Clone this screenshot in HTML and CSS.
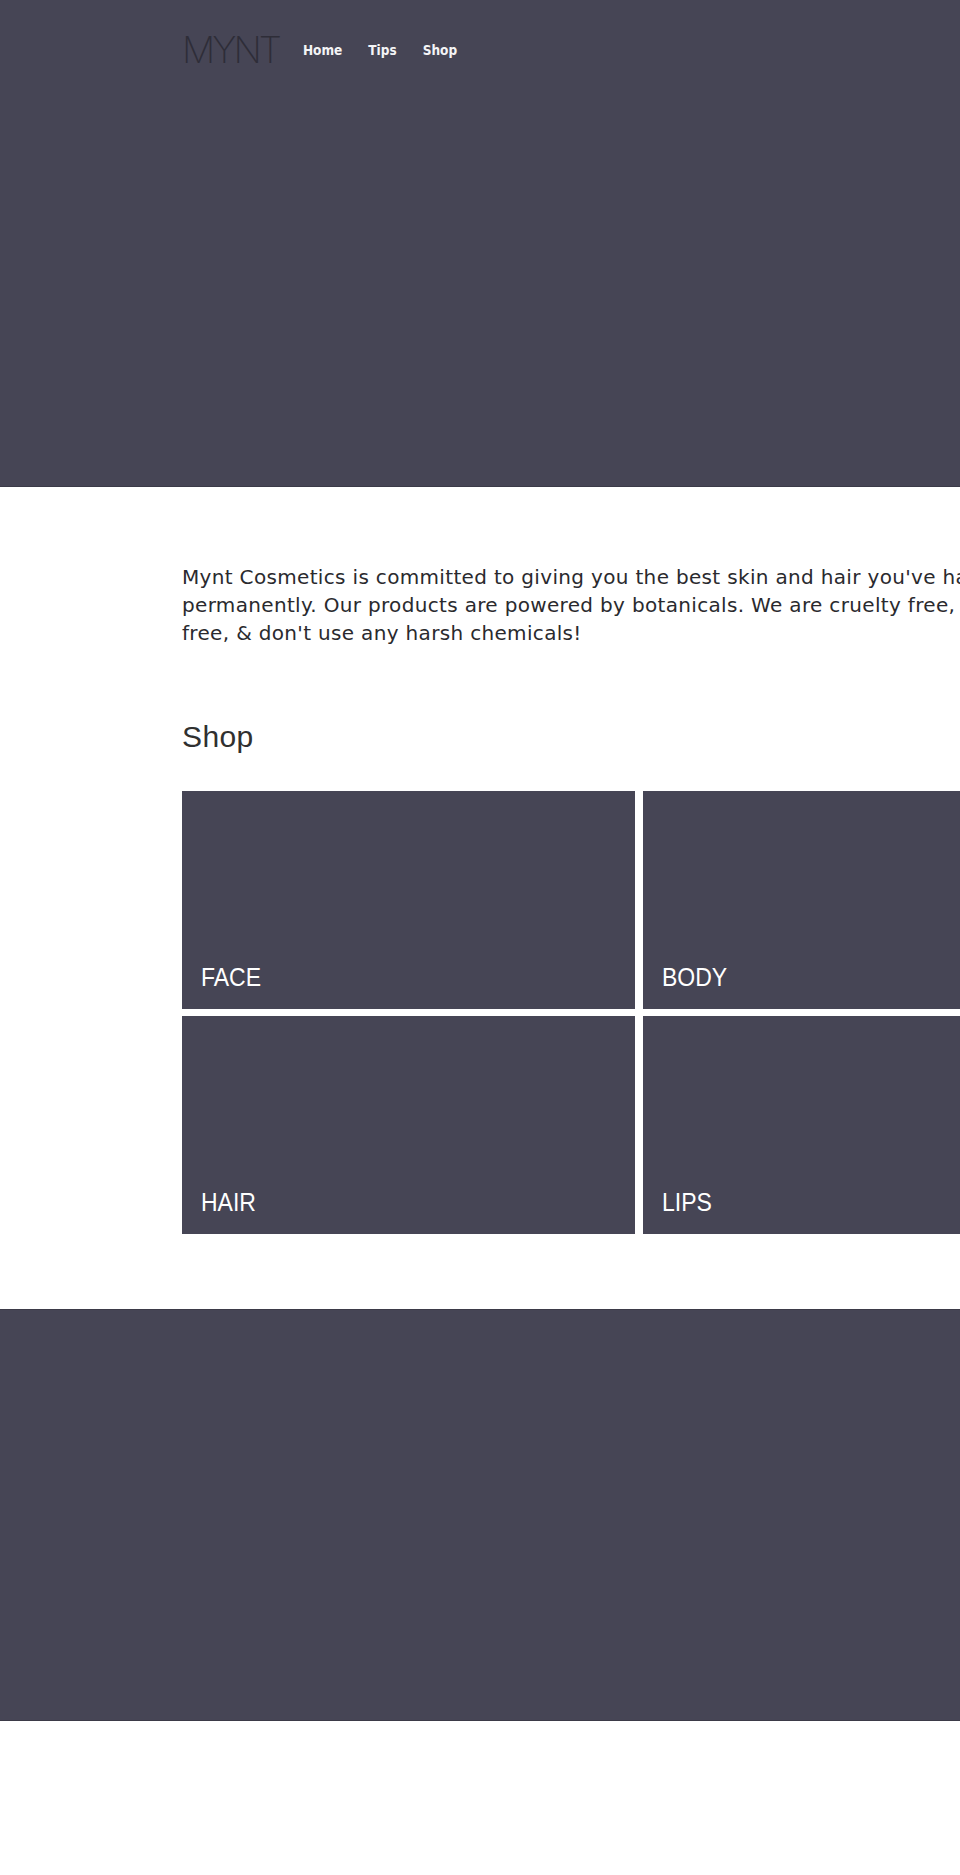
FILE: index.html
```html
<!DOCTYPE html>
<html lang="en">
<head>
<meta charset="utf-8">
<title>Mynt Cosmetics</title>
<link rel="stylesheet" href="styles.css">
</head>
<body>
<header class="hero">
  <div class="container topbar">
    <div class="logo">MYNT</div>
    <nav class="nav">
      <a href="#">Home</a>
      <a href="#">Tips</a>
      <a href="#">Shop</a>
    </nav>
  </div>
</header>
<main class="container content">
  <p class="intro">Mynt Cosmetics is committed to giving you the best skin and hair you've had permanently. Our products are powered by botanicals. We are cruelty free, paraben free, &amp; don't use any harsh chemicals!</p>
  <h2 class="section-title">Shop</h2>
  <div class="tiles">
    <a class="tile" href="#"><span class="tile-label">FACE</span></a>
    <a class="tile" href="#"><span class="tile-label">BODY</span></a>
    <a class="tile" href="#"><span class="tile-label">HAIR</span></a>
    <a class="tile" href="#"><span class="tile-label">LIPS</span></a>
  </div>
</main>
<footer class="footer"></footer>
</body>
</html>
```

FILE: styles.css
```css
html, body {
  margin: 0;
  padding: 0;
}
body {
  background: #ffffff;
  overflow-x: hidden;
  min-height: 1875px;
}
.container {
  margin-left: 182px;
  width: 914px;
}
.hero {
  height: 487px;
  box-sizing: border-box;
  background: #464555;
  border-bottom: 1px solid #3b3a48;
}
.topbar {
  display: flex;
  align-items: center;
  padding-top: 31px;
  gap: 24px;
}
.logo {
  font-family: Inter, "Liberation Sans", sans-serif;
  font-weight: 200;
  font-size: 37px;
  line-height: 37px;
  letter-spacing: -3px;
  color: #2e2d38;
}
.nav {
  display: flex;
  gap: 26px;
  padding-top: 1px;
}
.nav a {
  font-family: "DejaVu Sans Condensed", "DejaVu Sans", sans-serif;
  font-weight: bold;
  font-size: 13.5px;
  color: #f4f4f6;
  text-decoration: none;
}
.content {
  padding-top: 76px;
}
.intro {
  margin: 0;
  width: 900px;
  font-family: "DejaVu Sans", sans-serif;
  font-size: 20px;
  letter-spacing: 0.33px;
  line-height: 28px;
  color: #2a2a2e;
}
.section-title {
  margin: 72px 0 0;
  font-family: "Liberation Sans", Arial, sans-serif;
  font-weight: normal;
  font-size: 30px;
  line-height: 36px;
  letter-spacing: 0.4px;
  color: #303030;
}
.tiles {
  margin-top: 36px;
  display: grid;
  grid-template-columns: 453px 453px;
  grid-auto-rows: 218px;
  column-gap: 8px;
  row-gap: 7px;
}
.tile {
  display: flex;
  flex-direction: column;
  justify-content: flex-end;
  align-items: flex-start;
  background: #464555;
  padding: 0 0 19px 19px;
  text-decoration: none;
}
.tile-label {
  display: inline-block;
  font-family: "Liberation Sans", Arial, sans-serif;
  font-size: 25px;
  line-height: 25px;
  color: #ffffff;
  transform: scaleX(0.92);
  transform-origin: left center;
}
.footer {
  margin-top: 75px;
  height: 412px;
  box-sizing: border-box;
  background: #464555;
  border-top: 1px solid #3b3a48;
  border-bottom: 1px solid #3b3a48;
}
```
